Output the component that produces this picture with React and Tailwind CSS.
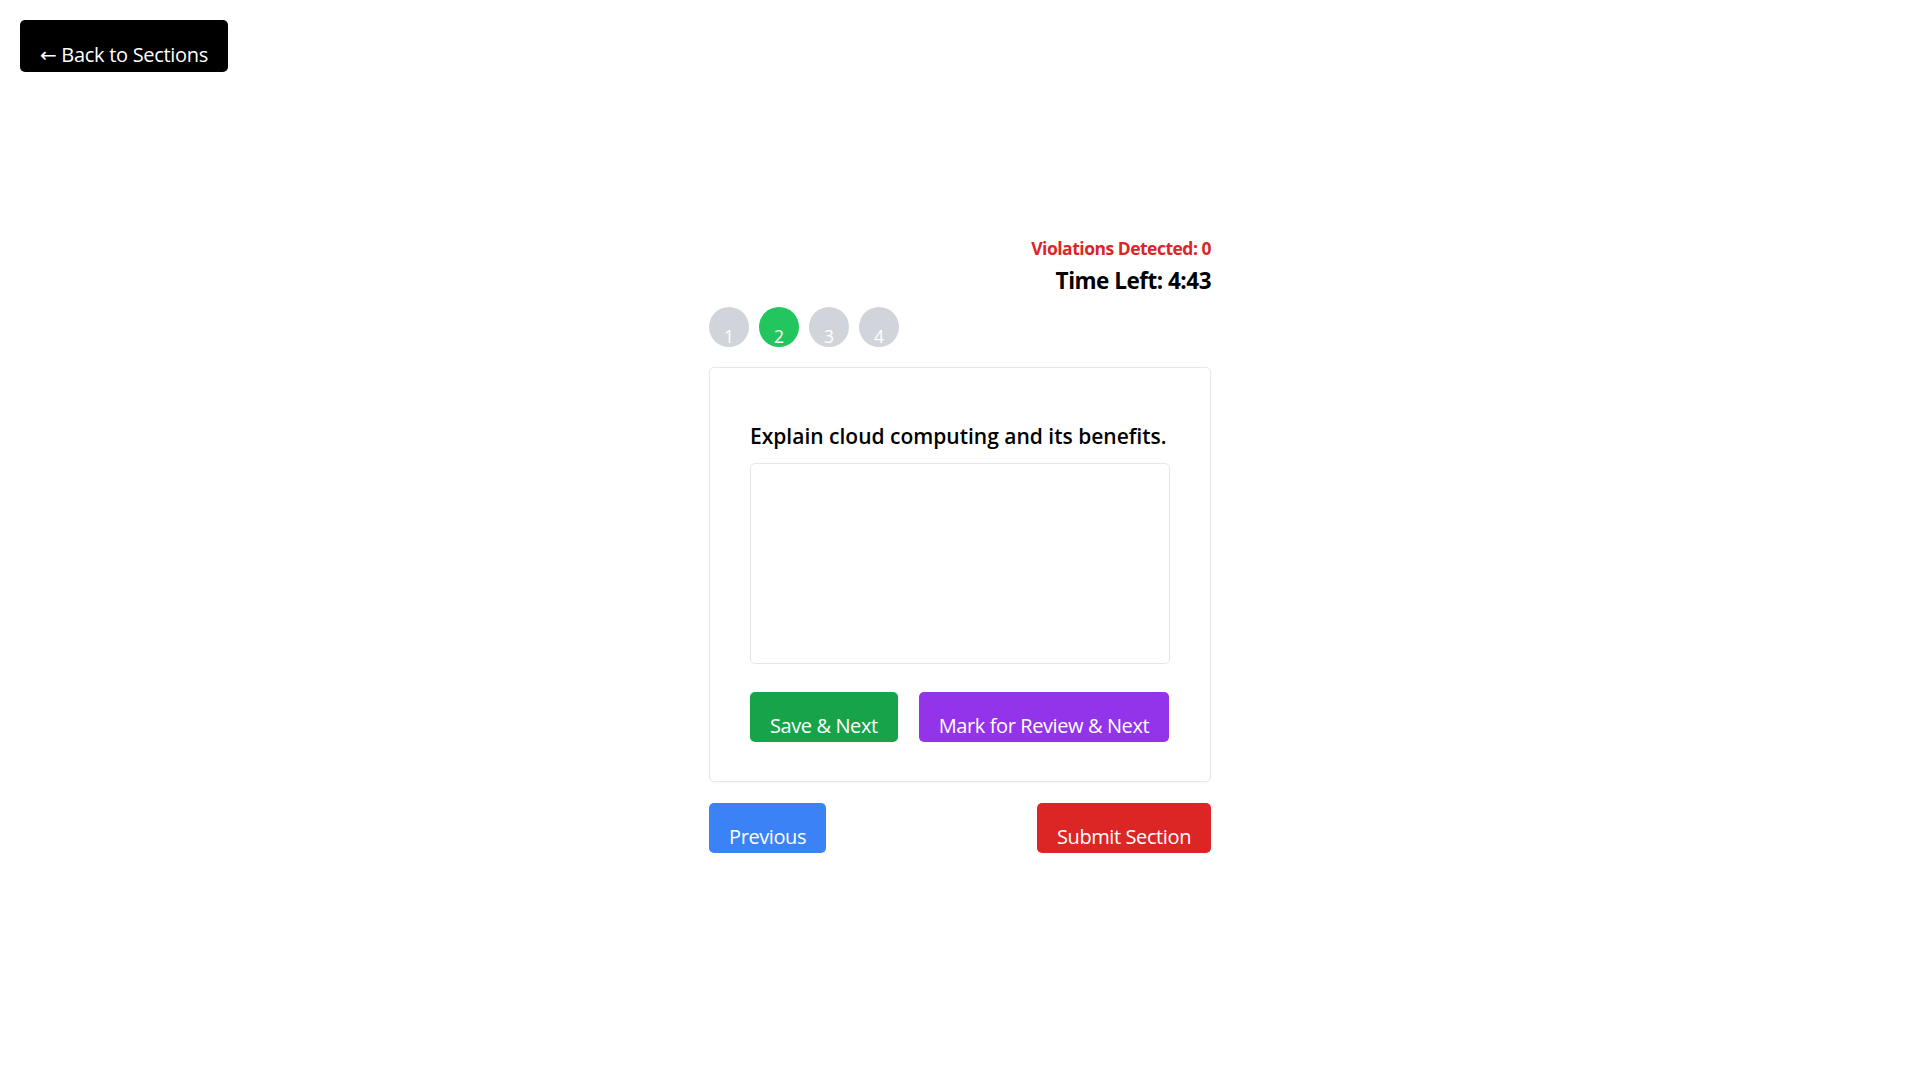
import React, { useState } from "react";

const questions = [
  { id: 1, text: "What is an operating system?" },
  { id: 2, text: "Explain cloud computing and its benefits." },
  { id: 3, text: "Describe the OSI model." },
  { id: 4, text: "What is a database index?" },
];

const btn =
  "text-white rounded-[5px] px-[20px] pt-[19px] pb-[1px] text-[20px] leading-[30px] tracking-[-0.4px] whitespace-nowrap";

const App = () => {
  const [current, setCurrent] = useState(1);
  const [answers, setAnswers] = useState({});

  const q = questions[current];

  return (
    <div
      className="min-h-screen bg-white text-black"
      style={{ fontFamily: '"Open Sans", "Noto Sans", sans-serif' }}
    >
      {/* back button */}
      <div className="pt-[20px] pl-[20px]">
        <button className="h-[52px] bg-black text-white rounded-[5px] px-[20px] pt-[20px] pb-[2px] text-[20px] leading-[30px] tracking-[-0.3px] whitespace-nowrap">
          <span className="font-['DejaVu_Sans'] text-[20px] leading-none">←</span> Back to Sections
        </button>
      </div>

      <div className="w-[502px] mx-auto mt-[164px]">
        {/* header */}
        <div className="text-right text-[#dc2626] font-bold text-[17.5px] leading-[25px] tracking-[-0.5px]">
          Violations Detected: 0
        </div>
        <div className="text-right font-bold text-[22.5px] leading-[35px] mt-[2px] tracking-[-0.5px]">
          Time Left: 4:43
        </div>

        {/* question palette */}
        <div className="flex gap-[10px] mt-[9px]">
          {questions.map((item, i) => (
            <button
              key={item.id}
              onClick={() => setCurrent(i)}
              className={
                i === current
                  ? "w-[40px] h-[40px] rounded-full bg-[#22c55e] text-white text-[17.5px] leading-[17.5px] pt-[21px] flex justify-center"
                  : "w-[40px] h-[40px] rounded-full bg-[#d1d5db] text-white text-[17.5px] leading-[17.5px] pt-[21px] flex justify-center"
              }
            >
              {item.id}
            </button>
          ))}
        </div>

        {/* question card */}
        <div className="mt-[20px] border border-[#e5e7eb] rounded-[5px] px-[40px] pt-[53px] pb-[39px] shadow-[0_1px_2px_rgba(0,0,0,0.03)]">
          <h2 className="text-[21px] leading-[30px] font-semibold whitespace-nowrap">{q.text}</h2>
          <textarea
            value={answers[q.id] || ""}
            onChange={(e) => setAnswers({ ...answers, [q.id]: e.target.value })}
            className="block w-full h-[201px] mt-[12px] border border-[#e5e7eb] rounded-[5px] resize-none outline-none p-[10px]"
          />
          <div className="flex gap-[21px] mt-[28px]">
            <button className={"bg-[#16a34a] " + btn}>Save &amp; Next</button>
            <button className={"bg-[#9333ea] " + btn}>Mark for Review &amp; Next</button>
          </div>
        </div>

        {/* navigation */}
        <div className="flex justify-between mt-[21px]">
          <button
            onClick={() => setCurrent(Math.max(0, current - 1))}
            className={"bg-[#3b82f6] " + btn}
          >
            Previous
          </button>
          <button className={"bg-[#dc2626] " + btn}>Submit Section</button>
        </div>
      </div>
    </div>
  );
};

export default App;
